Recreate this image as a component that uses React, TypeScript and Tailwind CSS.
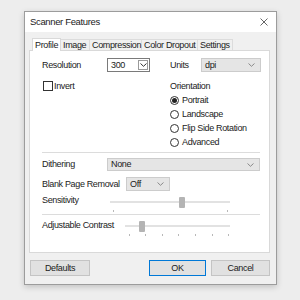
import React from 'react';

const Chevron = ({ color = '#8a8a8a' }: { color?: string }) => (
  <svg width="7" height="4" viewBox="0 0 7 4" className="shrink-0">
    <polyline points="0.5,0.5 3.5,3.3 6.5,0.5" fill="none" stroke={color} strokeWidth="1" />
  </svg>
);

const Select = ({ value, className }: { value: string; className: string }) => (
  <div className={`flex items-center justify-between bg-[#e5e5e5] border border-[#cccccc] pl-[3px] pr-[5px] ${className}`}>
    <span>{value}</span>
    <Chevron />
  </div>
);

const Radio = ({ label, checked }: { label: string; checked?: boolean }) => (
  <div className="h-[14px] flex items-center gap-[3px]">
    <div className="w-[9px] h-[9px] rounded-full border border-[#333333] flex items-center justify-center bg-white">
      {checked && <div className="w-[5px] h-[5px] rounded-full bg-[#222222]" />}
    </div>
    <span>{label}</span>
  </div>
);

interface SliderProps {
  width: string;
  trackTop: string;
  thumbLeft: string;
  thumbTop: string;
  ticks: number[];
  tickTop: string;
}

const Slider = ({ width, trackTop, thumbLeft, thumbTop, ticks, tickTop }: SliderProps) => (
  <div className={`relative h-full ${width}`}>
    <div className={`absolute left-0 right-0 h-[2px] bg-[#e2e2e2] ${trackTop}`} />
    <div className={`absolute w-[6px] h-[11px] bg-[#b4b4b4] rounded-[1px] ${thumbLeft} ${thumbTop}`} />
    {ticks.map((t) => (
      <div key={t} className={`absolute w-px h-[2px] bg-[#b8b8b8] ${tickTop}`} style={{ left: t }} />
    ))}
  </div>
);

export default function App() {
  const tabs = [
    { name: 'Image', w: 'w-[29px]' },
    { name: 'Compression', w: 'w-[52px]' },
    { name: 'Color Dropout', w: 'w-[56px]' },
    { name: 'Settings', w: 'w-[35px]' },
  ];

  return (
    <div className="w-[300px] h-[300px] bg-[#ededed] pt-[11px] pl-[24px] font-['Liberation_Sans',Arial,sans-serif] text-[9px] tracking-[-0.35px] text-[#1b1b1b] leading-none">
      <div className="w-[253px] h-[274px] border border-[#9c9c9c] bg-[#f0f0f0] flex flex-col shadow-[0_2px_6px_rgba(0,0,0,0.18)]">
        {/* title bar */}
        <div className="h-[20px] bg-white flex items-center justify-between pl-[5px] pr-[8px]">
          <span className="text-[9.5px] text-[#222222]">Scanner Features</span>
          <svg width="8" height="8" viewBox="0 0 8 8">
            <path d="M0.5 0.5 L7.5 7.5 M7.5 0.5 L0.5 7.5" stroke="#555555" strokeWidth="0.9" />
          </svg>
        </div>

        <div className="flex-1 flex flex-col pl-[4px] pr-[6px] pt-[6px]">
          {/* tabs */}
          <div className="relative z-10 flex items-end h-[13px] -mb-px pl-[3px]">
            <div className="w-[29px] h-[13px] bg-white border border-b-0 border-[#d9d9d9] flex items-center pl-[2px]">
              Profile
            </div>
            {tabs.map((t) => (
              <div
                key={t.name}
                className={`${t.w} h-[11px] mb-px border-t border-r border-[#dcdcdc] flex items-center pl-[2px]`}
              >
                {t.name}
              </div>
            ))}
          </div>

          {/* panel */}
          <div className="h-[203px] bg-white border border-[#d9d9d9] pl-[12px] flex flex-col">
            <div className="mt-[7px] h-[14px] flex items-center">
              <span className="w-[65px]">Resolution</span>
              <div className="w-[43px] h-[14px] bg-white border border-[#7a7a7a] flex items-center justify-between pl-[3px] pr-px">
                <span>300</span>
                <div className="w-[10px] h-[10px] border border-[#9a9a9a] flex items-center justify-center">
                  <Chevron color="#333333" />
                </div>
              </div>
              <span className="ml-[20px] w-[31px]">Units</span>
              <Select value="dpi" className="w-[60px] h-[14px]" />
            </div>

            <div className="mt-[7px] flex">
              <div className="w-[128px]">
                <div className="h-[14px] flex items-center gap-px pl-px">
                  <div className="w-[10px] h-[10px] border border-[#333333] bg-white" />
                  <span>Invert</span>
                </div>
              </div>
              <div className="flex flex-col">
                <div className="h-[14px] flex items-center">Orientation</div>
                <Radio label="Portrait" checked />
                <Radio label="Landscape" />
                <Radio label="Flip Side Rotation" />
                <Radio label="Advanced" />
              </div>
            </div>

            <div className="mt-[3px] w-[218px] h-px bg-[#dcdcdc]" />

            <div className="mt-[5px] h-[13px] flex items-center">
              <span className="w-[65px]">Dithering</span>
              <Select value="None" className="w-[153px] h-[13px]" />
            </div>

            <div className="mt-[6px] h-[14px] flex items-center">
              <span className="w-[84px]">Blank Page Removal</span>
              <Select value="Off" className="w-[44px] h-[14px]" />
            </div>

            <div className="mt-[2px] h-[16px] flex">
              <span className="w-[68px] h-[14px] flex items-center">Sensitivity</span>
              <Slider
                width="w-[120px]"
                trackTop="top-[8px]"
                thumbLeft="left-[69px]"
                thumbTop="top-[4px]"
                ticks={[3, 117]}
                tickTop="top-[17px]"
              />
            </div>

            <div className="mt-[5px] w-[218px] h-px bg-[#dcdcdc]" />

            <div className="mt-[3px] h-[16px] flex">
              <span className="w-[83px] h-[14px] flex items-center">Adjustable Contrast</span>
              <Slider
                width="w-[105px]"
                trackTop="top-[7px]"
                thumbLeft="left-[14px]"
                thumbTop="top-[3px]"
                ticks={[4, 20, 37, 53, 70, 87, 103]}
                tickTop="top-[16px]"
              />
            </div>
          </div>

          {/* buttons */}
          <div className="mt-[7px] h-[16px] flex justify-between pl-px">
            <div className="w-[60px] h-full bg-[#e1e1e1] border border-[#c4c4c4] flex items-center justify-center">
              Defaults
            </div>
            <div className="flex gap-[5px]">
              <div className="w-[57px] h-full bg-[#e1e1e1] border border-[#0078d7] flex items-center justify-center">
                OK
              </div>
              <div className="w-[59px] h-full bg-[#e1e1e1] border border-[#c4c4c4] flex items-center justify-center">
                Cancel
              </div>
            </div>
          </div>
        </div>
      </div>
    </div>
  );
}
